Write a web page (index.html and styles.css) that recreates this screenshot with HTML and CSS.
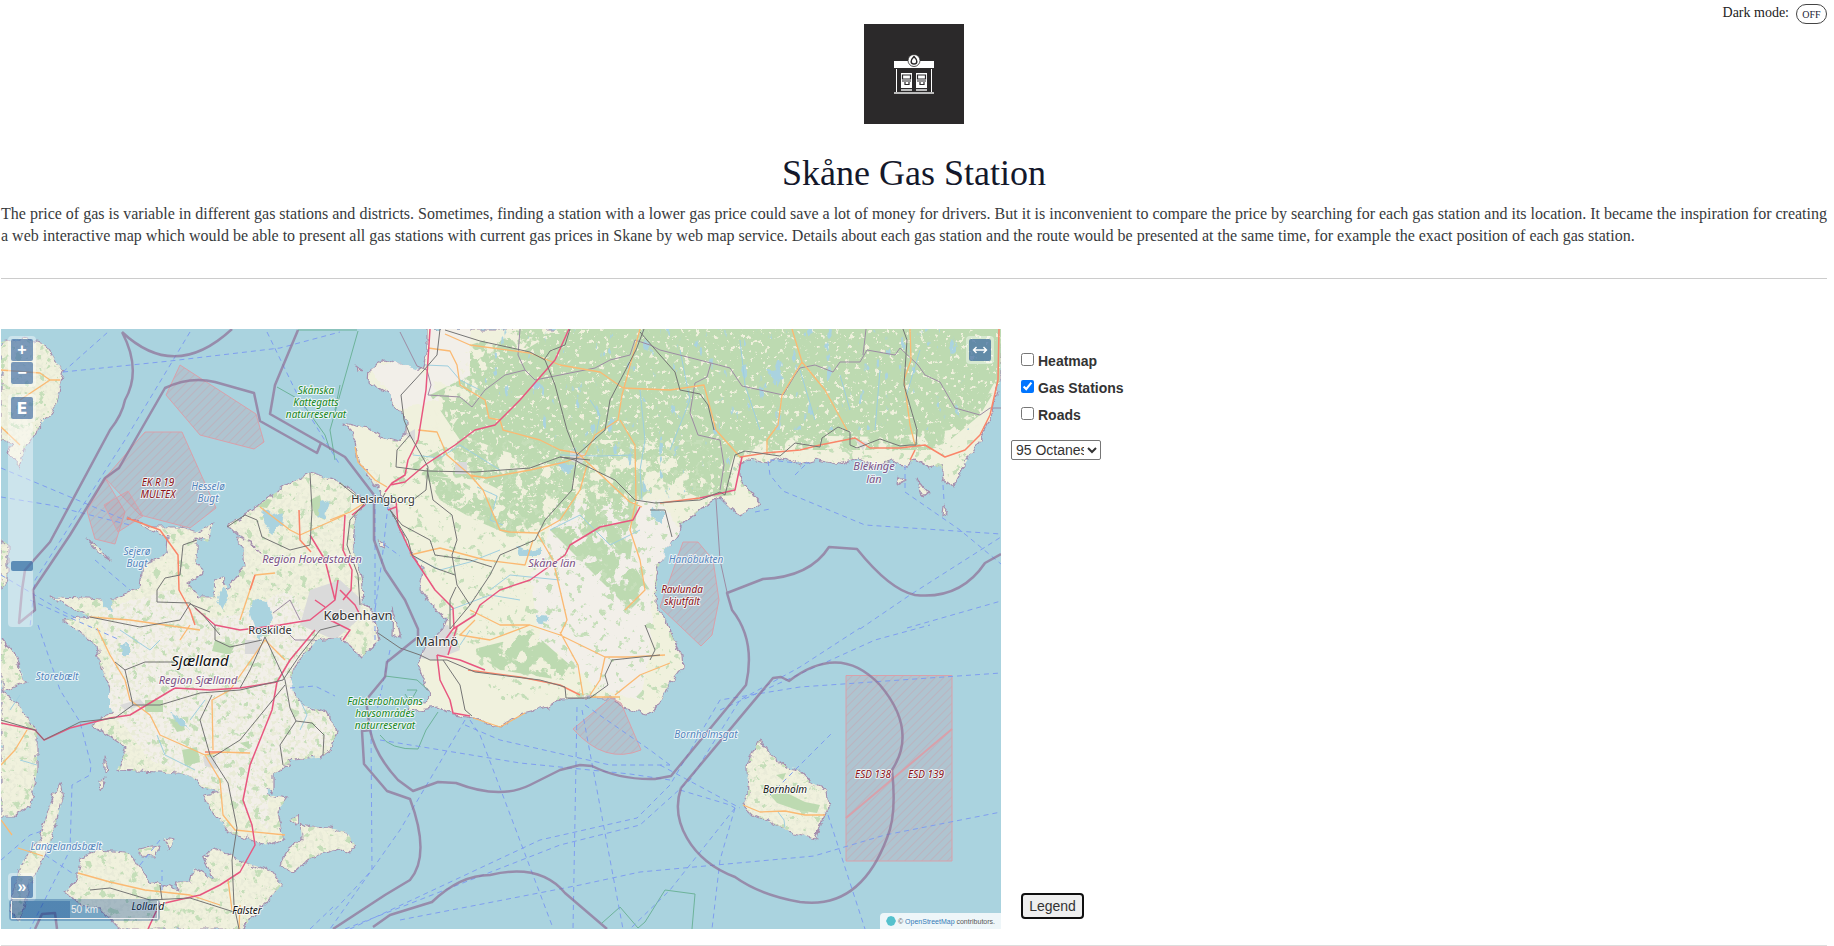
FILE: index.html
```html
<!DOCTYPE html>
<html lang="en">
<head>
<meta charset="utf-8">
<title>Skåne Gas Station</title>
<link rel="stylesheet" href="styles.css">
</head>
<body>
<header class="top">
  <div class="mode"><label for="dark">Dark mode:</label><button id="dark" class="mode-btn" type="button">OFF</button></div>
  <svg class="logo" viewBox="0 0 100 100" role="img" aria-label="Gas station">
    <rect width="100" height="100" fill="#2b292a"/>
    <path fill="#fff" d="M30 37h40v7H30zM32 45h1v23h-1zM67 45h1v23h-1zM37 49h11v15H37zM52 49h11v15H52z"/>
    <path fill="#bbb" d="M30 68h40v2H30zM37 65h11v2H37zM52 65h11v2H52z"/>
    <path fill="none" stroke="#2b292a" stroke-width="1.2" d="M38.500 51h8v4h-8zM53.500 51h8v4h-8zM38 57h9M53 57h9M41 58v2.500h4V58M56 58v2.500h4V58"/>
    <circle cx="50" cy="36.500" r="6" fill="#fff" stroke="#2b292a" stroke-width=".8"/>
    <path fill="none" stroke="#2b292a" stroke-width="1.500" d="M50 32.500c-4 4-3.500 7.500 0 7.500s4-3.500 0-7.500z"/>
  </svg>
  <h1>Skåne Gas Station</h1>
  <p class="intro">The price of gas is variable in different gas stations and districts. Sometimes, finding a station with a lower gas price could save a lot of money for drivers. But it is inconvenient to compare the price by searching for each gas station and its location. It became the inspiration for creating a web interactive map which would be able to present all gas stations with current gas prices in Skane by web map service. Details about each gas station and the route would be presented at the same time, for example the exact position of each gas station.</p>
</header>
<main class="content">
  <div class="map">
    <svg class="tiles" viewBox="1 329 1000 600" preserveAspectRatio="xMidYMid slice">
      <defs>
        <filter id="holes" x="0" y="0" width="1" height="1" color-interpolation-filters="sRGB">
          <feTurbulence type="fractalNoise" baseFrequency=".2" numOctaves="4" seed="8"/>
          <feColorMatrix values="0 0 0 0 0 0 0 0 0 0 0 0 0 0 0 14 0 0 0 -8.900" result="n"/>
          <feComposite in="SourceGraphic" in2="n" operator="in"/>
        </filter>
        <filter id="lakes" x="0" y="0" width="1" height="1" color-interpolation-filters="sRGB">
          <feTurbulence type="fractalNoise" baseFrequency=".12 .05" numOctaves="4" seed="31"/>
          <feColorMatrix values="0 0 0 0 0 0 0 0 0 0 0 0 0 0 0 16 0 0 0 -11" result="n"/>
          <feComposite in="SourceGraphic" in2="n" operator="in"/>
        </filter>
        <filter id="woods" x="0" y="0" width="1" height="1" color-interpolation-filters="sRGB">
          <feTurbulence type="fractalNoise" baseFrequency=".13" numOctaves="4" seed="21"/>
          <feColorMatrix values="0 0 0 0 0 0 0 0 0 0 0 0 0 0 0 14 0 0 0 -8.700" result="n"/>
          <feComposite in="SourceGraphic" in2="n" operator="in"/>
        </filter>
        <filter id="fields" x="0" y="0" width="1" height="1" color-interpolation-filters="sRGB">
          <feTurbulence type="fractalNoise" baseFrequency=".25" numOctaves="3" seed="12"/>
          <feColorMatrix values="0 0 0 0 0 0 0 0 0 0 0 0 0 0 0 8 0 0 0 -4" result="n"/>
          <feComposite in="SourceGraphic" in2="n" operator="in"/>
        </filter>
        <filter id="dense" x="0" y="0" width="1" height="1" color-interpolation-filters="sRGB">
          <feTurbulence type="fractalNoise" baseFrequency=".07" numOctaves="5" seed="4"/>
          <feColorMatrix values="0 0 0 0 0 0 0 0 0 0 0 0 0 0 0 18 0 0 0 -7.600" result="n"/>
          <feComposite in="SourceGraphic" in2="n" operator="in"/>
        </filter>
        <filter id="coast" x="-.05" y="-.05" width="1.100" height="1.100">
          <feTurbulence type="fractalNoise" baseFrequency=".11" numOctaves="3" seed="3"/>
          <feDisplacementMap in="SourceGraphic" scale="8" xChannelSelector="R" yChannelSelector="G"/>
        </filter>
        <pattern id="hatch" width="6" height="6" patternUnits="userSpaceOnUse" patternTransform="rotate(45)">
          <rect width="6" height="6" fill="#c08f9c" fill-opacity=".22"/>
          <path d="M0 0v6" stroke="#d98f98" stroke-opacity=".6"/>
        </pattern>
        <g id="land">
          <path id="sweden" d="M427 329V350L423 367 417 372 402 365 385 359 370 368 369 383 390 395 395 408 407 423V435L395 441 380 437 367 428 345 422 355 442 358 460 373 483 385 497 393 513 402 533 410 553 423 570 420 590 433 607 447 620 443 630 427 645 418 665 425 682 430 695 427 703 407 702 410 712 437 707 453 715 473 718 487 725 502 727 523 713 547 707 560 699 590 698 613 698 623 708 647 714 658 707 667 688 683 668 682 655 670 632 668 623 656 605 657 573 663 553 677 537 680 527 703 507 720 497 730 507 740 515 760 503 740 480 738 465 750 460 767 463 785 458 800 465 817 460 840 465 860 458 875 466 893 461 905 468 915 459 930 469 941 466 943 480 953 487 963 467 980 440 993 413 1000 380 1001 329Z"/>
          <path id="zealand" d="M127 518 150 527 180 527 197 532 213 523 208 542 197 538 197 563 203 573 187 583 200 597 213 597 214 580 222 577 229 590 233 580 245 567 243 548 237 537 250 542 260 552 227 525 253 510 283 487 310 473 340 482 365 502 355 517 353 547 363 583 362 603 372 610 378 642 362 657 350 645 343 637 317 640 293 668 290 688 303 705 327 713 337 732 330 750 320 758 293 760 273 775 273 792 258 784 262 794 287 798 277 812 283 838 267 845 247 838 230 833 213 812 203 795 221 792 203 787 193 778 180 773 117 770 127 748 113 738 92 725 112 712 110 688 100 665 97 645 73 628 62 620 90 617 50 597 87 598 113 600 140 587 143 567 167 553 168 537 150 530Z"/>
          <path id="lolland" d="M78 870 82 857 97 850 127 852 150 882 180 890 176 882 190 882 194 868 214 880 204 856 217 848 233 858 273 872 282 885 260 908 243 929H120L100 908 82 905 65 892 78 880Z"/>
          <path id="funen" d="M290 848 280 865 293 872 310 858 340 848 350 852 355 845 347 832 330 828 310 827 300 822 302 838ZM60 783 50 805 40 838 20 865 10 912 20 922 30 885 47 852 63 798ZM1 693 17 702 37 732 37 772 30 805 13 817 1 817ZM1 638 13 652 26 682 1 692ZM1 342 23 338 43 343 63 370 57 403 37 430 25 447 20 467 7 453 13 443 1 439ZM1 538 8 545 8 580 1 590Z"/>
          <path id="islets" d="M759 740 770 755 787 767 797 768 810 782 827 790 829 808 822 818 816 838 793 833 770 822 753 815 743 805 748 795 747 765ZM87 540 98 547 112 561 98 552ZM379 539 386 542 385 550 378 547ZM104 756 108 770 104 773ZM99 782 105 780 100 790ZM138 850 158 846 156 856 142 855ZM164 838 174 840 169 850ZM393 607 400 638 392 635ZM898 475 905 480 896 485ZM918 480 928 492 922 496ZM943 505 948 513 942 516ZM355 366 362 371 356 370ZM290 820 298 815 296 824Z"/>
        </g>
        <clipPath id="inland"><use href="#sweden"/><use href="#zealand"/><use href="#lolland"/><use href="#funen"/><use href="#islets"/></clipPath>
        <clipPath id="swe"><use href="#sweden"/></clipPath>
      </defs>
      <rect x="1" y="329" width="1000" height="600" fill="#aad3df"/>
      <g filter="url(#coast)">
        <use href="#land" fill="#f0f1dd" stroke="#a58fae" stroke-width="1.200"/>
        <path fill="#f2efe9" d="M110 650 100 610 170 590 205 620 250 610 285 590 320 630 290 670 295 700 330 720 330 745 265 770 270 830 220 790 150 760 110 710ZM370 368 395 362 430 375 440 400 400 410ZM560 500 660 500 680 530 655 570 650 650 640 700 600 690 540 640 530 580ZM430 329H470V390L430 380Z"/>
      </g>
      <g clip-path="url(#swe)">
        <path fill="#bddab1" filter="url(#dense)" d="M430 395 470 375 470 345 520 329H1001V380L980 415 950 440 930 450H745L735 495 700 498 660 480 620 520 570 545 560 520 480 480 420 475 410 465 460 440Z"/>
        <path fill="#bddab1" d="M500 365 560 329H1001V370L985 400 950 430 890 437 770 435 735 452 722 490 690 470 680 440 650 440 600 440 570 470 500 450 450 430 470 400Z"/>
        <path fill="#bddab1" filter="url(#dense)" d="M425 475 460 480 490 500 530 475 570 470 575 500 540 530 510 535 475 520 440 500ZM550 530 580 510 640 490 630 560 650 590 630 610 580 560Z"/>
        <path fill="#eff0dc" filter="url(#holes)" d="M480 329H1001V465H740V500L620 510 560 540 430 500 400 460Z"/>
        <path fill="#aad3df" filter="url(#lakes)" d="M480 329H980V430H740V470L640 510 480 380Z"/>
        <path fill="#c5deb9" filter="url(#woods)" d="M390 440H710V700H500L390 560ZM740 440H990V500H740Z"/>
        <path fill="#bddab1" filter="url(#dense)" d="M470 650 510 640 530 630 570 665 560 680 500 670Z"/>
      </g>
      <g clip-path="url(#inland)">
        <path fill="#e9ebd8" filter="url(#fields)" d="M1 329H70V470H1ZM1 470H380V929H1ZM740 735H835V845H740Z"/>
        <path fill="#c5deb9" filter="url(#woods)" d="M1 329H70V470H1ZM1 470H380V929H1ZM740 735H835V845H740Z"/>
        <path fill="#bddab1" d="M145 700h18v12h-18zM182 750l15-3 3 15-15 4zM770 795l15-3 20 10 15 3-3 8-20-3-20-7zM776 775l10-2-3 7zM254 495l18 5-5 8-14-2zM170 720l12-2 3 12-8 2zM240 743l9-2v8zM215 640l20 5-5 10-18-4zM310 500l10-5 5 25-10-5z"/>
        <path fill="#dadada" d="M310 590 340 580 362 600 358 620 335 640 300 625ZM245 640h15v14h-15zM203 757h12l2 12-12-3zM423 630l25-5 12 25-25 10-16-2zM365 495l15-2 20 18-5 5zM405 435l10-6v12zM455 462h12v12h-12zM570 450l15 4-3 10-12-3zM855 440l12 2-4 8zM120 705l20-6 5 6-20 5z"/>
      </g>
      <path filter="url(#coast)" fill="#aad3df" d="M263 507 272 515 284 512 282 525 272 533 264 520ZM320 503 330 500 325 520 317 517ZM253 600 268 602 273 618 260 640 250 612ZM100 595 113 601 111 611 103 605ZM120 645 129 644 129 656 122 656ZM225 585 228 598 223 612 217 597ZM768 371 778 368 784 378 775 385ZM515 545 525 550 540 548 540 556 520 556ZM559 461 572 465 570 475 560 470ZM536 615 548 617 544 624 538 622ZM650 508 663 510 663 525 655 520ZM170 712 183 720 190 730 177 724Z"/>
      <g class="stream">
        <path d="M425 365 448 366 460 380 480 390M413 455 440 458 460 445 500 470M477 487 497 496 490 520 503 525M590 400 600 415 595 440M560 455 600 456 633 455M640 390 645 440 640 470 642 500M550 530 580 515 610 545 640 530M410 555 440 570 470 562 500 550M490 590 510 575 560 580M450 610 490 595 520 600M740 340 745 385 760 430M800 370 815 420M840 375 850 410M880 370 875 430M920 350 905 400M680 350 690 400 670 450M460 645 470 630M120 630 150 650 160 640M157 735 165 755 195 770M205 700 190 720M778 812 784 820 785 828M300 700 307 715 300 730M10 710 20 695M20 760 37 765"/>
      </g>
      <g class="border">
        <path d="M427 370 431 385 428 395 460 397 472 407 485 390 505 375 525 370 535 380 560 375 595 368 610 360 630 355 635 340 650 345 660 350 711 363 730 368 742 386 783 395 795 375 800 368 815 365 833 372 840 362 860 362 867 350 895 355 900 348 918 365 925 375 940 382 955 408 980 415 990 408H1001M520 329 518 355 525 370M711 363 707 377 695 383 690 413 698 435 720 440 724 465 720 490M400 332 417 366 427 370M866 329 863 355M716 500 720 560 727 592M273 613 290 600 300 620M280 625 295 640 315 640"/>
      </g>
      <g class="zone">
        <path d="M180 365 166 395 200 435 254 449 264 442 256 414ZM145 432H182L216 508 190 528 140 515 105 478Z"/>
        <path d="M105 478 87 511 95 539 115 544 125 512Z"/>
        <path d="M104 505 128 491 143 516 118 532Z"/>
        <path d="M683 542H698L713 560 719 600 712 635 701 646 660 607ZM573 729 611 698 621 703 641 750 Q605 765 573 729ZM846 675.500H952V861H846Z"/>
        <path class="zone-line" d="M846 818 952 729"/>
      </g>
      <g class="reserve">
        <path d="M277 387 300 400 325 435 330 450M358 331 330 430 335 460M340 385 335 410M298 330H357M385 676 417 680 428 690M380 735Q390 750 418 749L426 730 438 712M407 690H417L410 702 405 694M602 923 620 907 638 928 645 922 665 890 695 894 692 929"/>
      </g>
      <g class="ferry">
        <path d="M63 372 108 332M63 372 170 361 280 348 340 332M190 332 125 440 35 580 30 627M267 332 300 400 340 465M1 468 125 520M1 497 50 505 130 525M1 575 60 610 80 620M30 600 120 640M95 560 130 590M38 625 60 690 80 722 91 765 90 775 72 785 70 850 30 929M45 855 75 875M290 688 315 686 335 696M375 500V640M388 505 382 560 375 610M385 545 400 556M390 650 375 720M371 730 372 870 330 915M465 720 400 830 330 929M470 720 480 735 553 928M380 740 520 763 630 774 670 780M465 725 500 740 610 765 670 765M577 707 573 929M582 710 623 929M585 705 650 750 670 765M350 929 540 840 637 818 670 785 720 700 800 687 1001 673M345 929 560 845 640 825 690 780 740 700 800 667 860 628M720 710 875 640 930 625M660 765 740 808M680 790 730 805 735 808M735 808 670 890 630 929M735 808 720 860 712 929M770 795 833 732M828 815 865 929M400 920 580 885 640 872 814 856 885 835 1001 812M768 461 770 475 783 491 865 525 1001 534M810 463 796 463 770 460M795 475 805 465M905 465V492L960 530 1001 564M860 629 910 595 1001 537M907 628 1001 601M943 485 944 500M755 512 770 509M1 860 30 835 45 830M140 865 160 840M162 890V870M310 929 335 905"/>
      </g>
      <g class="orange">
        <path d="M1 370 40 373 50 380 60 380M50 380 20 400M1 427 20 445M355 447 358 462 375 480 387 487M428 348 450 351 457 365 460 385 485 400 489 418 500 420 503 430 540 440 560 450 578 453 585 460 630 502 642 507M418 430 437 432 447 455 470 475 486 478 530 470 565 462 585 455 595 435 618 420 622 395 640 329M445 334 470 345 530 353 560 365 600 372 623 388 670 390 704 385 716 430 740 457M620 420 635 445 636 500 630 530 640 560 645 590 625 610M470 475 483 490 500 530 510 532 537 533 560 520 580 490 587 465M537 533 553 560 560 590 567 620 560 635 530 625 490 640 460 635 475 620M410 555 440 548 485 560 525 565 533 540M792 329 802 362 825 390 847 430M802 362 782 395 778 425 767 440V455M910 329 911 360 904 380 910 425 915 445M560 632 578 665 583 695M560 635 605 657 630 657 665 655M605 657 600 680 590 695M615 695 640 675 670 663M470 610 500 625 530 625M330 520 350 512 363 504M90 617 130 620 200 630M180 640 190 625M97 628 110 655 125 680 130 700 150 715 160 735 205 755 220 752 250 753M205 755 220 780 223 815 235 830 285 835M213 750 212 700 230 690 265 640 285 660M260 507 290 530 300 535 345 515M240 620 255 575 275 573M78 873 110 882 145 890 190 895 220 905M228 880 232 910M240 905 239 929M1 765 15 750 27 730M18 848 43 856M743 805 760 812 785 811 805 815 825 815M473 718 500 727 525 713M590 697 620 697M1 820 12 835"/>
      </g>
      <g class="red">
        <path d="M740 457 765 453 800 450 820 445 855 438 870 448 900 448 925 445 945 457 965 450 980 435 990 415 998 380 999 329M127 518 160 530 178 555 179 590 190 610 195 625M299 510 300 540 311 552M205 752 222 752M468 670 520 677 560 685 580 695M660 503 700 498M910 460 915 450M250 590 255 575"/>
      </g>
      <g class="pink">
        <path d="M430 329 426 390 418 440 408 460 405 475 392 483 385 492M569 329 555 360 520 400 495 425 475 430 455 445 425 465 405 482 390 485M396 500 398 525 412 555 435 590 453 608 454 629M396 507 388 510M640 507 633 520 600 527 570 545 565 555 530 580 500 590 480 605 475 615 453 629 445 640M700 498 735 490 742 457M437 655 440 680 450 700 453 713 470 716M437 655 460 660 485 670M457 627 448 655M1 723 35 730 44 740 70 728 110 718 130 715 155 700 175 688 210 690 240 688 277 682 290 660 315 630M277 682 272 710 260 740 250 765 243 800 252 825 255 845 240 872 220 885 200 895 165 903M160 903 148 929M195 608 215 625 240 630 280 625 310 620 335 600 338 580M335 600 325 560 310 535M345 515 343 550 352 570 351 590 343 600M340 590 355 605 360 615M330 620 350 630 343 640M365 505 352 515M315 600 325 607"/>
      </g>
      <g class="rail">
        <path d="M440 329 437 355 424 370 401 395 404 420 410 435 428 467 426 490 413 500M410 435 397 450 396 467 427 471 475 472 530 468 560 457 590 460M427 468 433 500 452 515 457 540 452 555 457 585 470 605M560 457 575 460 580 463 615 480 635 500 655 503 700 500 720 492 725 495 735 455 745 451 780 456 795 443 820 447 822 438 838 427 850 432 850 445 857 448 880 439 900 446 910 445 916 445 917 430 904 385 907 340 903 329M445 330 480 341 530 352 545 360 555 385 567 430 577 455 572 490 545 520 535 540 500 555 490 575 470 605 450 629M544 360 550 351 565 345 570 329M644 329 636 350 610 400 605 430 577 455M640 332 660 355 675 372 680 390 700 394 708 405 714 430M385 493 380 503M390 510 402 525 430 540 435 555 470 560 492 567M390 510 408 540 412 555 435 568 455 575M450 629V600L456 587M340 483 365 503 350 520 347 545 358 575 360 605M378 633 400 648 420 655 430 660 447 660 475 672 540 680 565 687 566 698 590 698 608 685 605 675 612 660 660 655M443 660 460 685 465 710 472 716M645 625 655 650 650 660M650 510 665 510 672 537M227 527 245 515 257 520 262 537 290 550 310 545 312 510 310 473M197 540 183 545 180 575 165 578 157 590V602L190 603 203 615 220 635M90 617 140 627 180 620 190 604 210 612M1 720 35 730 44 740 80 722 115 718 133 705 160 705 200 693 240 690 283 680 300 655 320 630 340 625M133 705 125 670 115 662M125 670 145 662 175 662M212 695 200 720 210 755 228 783 237 828 232 860 234 905 239 929M213 757 240 740 285 685M265 637 285 680 290 708 296 721 280 745 283 765M296 721 312 723 324 735 323 755M265 637 250 670 240 688M215 625 215 640 230 647 262 640M90 890 110 888 150 900 190 898 234 912M160 885 162 900"/>
      </g>
      <g class="sea-border">
        <path d="M122 332Q175 382 232 329M122 332Q142 370 125 400Q122 415 110 430L50 542 25 570 22 590 19 623 35 610 33 590 70 535 105 478 119 468 165 388Q190 376 215 382L254 393 260 421 317 453 321 443 270 414 275 385 298 330M321 443 345 457 374 495 374 540 385 570 405 600 418 629 418 637 387 662 385 677 366 700 370 730Q375 755 398 780L413 791 438 782 456 783Q500 800 530 785L560 770 580 765 592 766Q620 780 655 779L671 776 746 685Q756 640 732 610L727 593 763 579Q810 577 829 547L857 549Q890 590 915 595Q960 600 985 563L1001 554M371 730 362 731 364 764 387 791 410 799Q431 855 410 880L385 895 333 929M373 927 390 915 432 902Q460 875 490 875Q540 863 565 893L607 929M681 788 773 678 781 677 789 681Q840 642 880 685Q918 730 892 770Q897 815 887 838Q860 910 800 902Q760 895 735 877C690 860 670 820 681 788M35 929 42 914 55 913 57 929"/>
      </g>
      <g class="label">
        <g class="place">
          <text x="383" y="503">Helsingborg</text><text x="270" y="634">Roskilde</text>
          <text class="city" x="358" y="620">København</text><text class="city" x="437" y="646">Malmö</text>
        </g>
        <g class="isle"><text class="big" x="200" y="666">Sjælland</text><text x="785" y="793">Bornholm</text><text x="148" y="910">Lolland</text><text x="247" y="914">Falster</text></g>
        <g class="region"><text x="312" y="563">Region Hovedstaden</text><text x="198" y="684">Region Sjælland</text><text x="552" y="567">Skåne län</text><text x="874" y="470">Blekinge<tspan x="874" dy="13">län</tspan></text></g>
        <g class="water"><text x="208" y="490">Hesselø<tspan x="208" dy="12">Bugt</tspan></text><text x="137" y="555">Sejerø<tspan x="137" dy="12">Bugt</tspan></text><text x="57" y="680">Storebælt</text><text x="66" y="850">Langelandsbælt</text><text x="696" y="563">Hanöbukten</text><text x="706" y="738">Bornholmsgat</text></g>
        <g class="nature"><text x="316" y="394">Skånska<tspan x="316" dy="12">Kattegatts</tspan><tspan x="316" dy="12">naturreservat</tspan></text><text x="385" y="705">Falsterbohalvöns<tspan x="385" dy="12">havsområdes</tspan><tspan x="385" dy="12">naturreservat</tspan></text></g>
        <g class="danger"><text x="158" y="486">EK R 19<tspan x="158" dy="12">MULTEX</tspan></text><text x="682" y="593">Ravlunda<tspan x="682" dy="12">skjutfält</tspan></text><text x="873" y="778">ESD 138</text><text x="926" y="778">ESD 139</text></g>
      </g>
    </svg>
    <div class="ctl zoom-ctl"><button type="button" aria-label="Zoom in">+</button><button type="button" aria-label="Zoom out">−</button></div>
    <div class="ctl extent-ctl"><button type="button" aria-label="Fit to extent">E</button></div>
    <div class="slider"><button type="button" aria-label="Zoom level"></button></div>
    <div class="ctl full-ctl"><button type="button" aria-label="Full screen"><svg viewBox="0 0 16 10"><path d="M1.500 5h13M4.500 2l-3 3 3 3M11.500 2l3 3-3 3" fill="none" stroke="#fff" stroke-width="1.400"/></svg></button></div>
    <div class="ctl over-ctl"><button type="button" aria-label="Overview map">»</button></div>
    <div class="scale"><div>50 km</div></div>
    <div class="credit"><svg viewBox="0 0 10 10"><path fill="#55c1cd" d="M5 0l3 1 2 4-2 4-3 1-3-1-2-4 2-4z"/></svg><span>© <a href="#">OpenStreetMap</a> contributors.</span></div>
  </div>
  <aside class="side">
    <div class="layers">
      <label><input type="checkbox">Heatmap</label>
      <label><input type="checkbox" checked>Gas Stations</label>
      <label><input type="checkbox">Roads</label>
    </div>
    <select class="fuel" aria-label="Fuel type"><option>95 Octanes</option></select>
    <button class="legend" type="button">Legend</button>
  </aside>
</main>
</body>
</html>
```
FILE: styles.css
```css
* { box-sizing: border-box; }
body { margin: 0; padding: 0 7px 0 1px; font-family: "Liberation Serif", serif; color: #333; background: #fff; }
.top { display: flex; flex-direction: column; align-items: center; border-bottom: 1px solid #ccc; padding-bottom: 31px; }
.mode { align-self: flex-end; display: flex; align-items: center; gap: 7px; height: 24px; padding-top: 2px; font-size: 14px; color: #222; }
.mode-btn { margin-top: 2px; width: 31px; height: 20px; padding: 0; border: 1px solid #444; border-radius: 10px; background: #fff; color: #223; font: 10px "Liberation Serif", serif; }
.logo { width: 100px; height: 100px; display: block; }
h1 { margin: 28px 0 9px; font-size: 36px; line-height: 42px; font-weight: 400; color: #14182b; }
.intro { margin: 0; font-size: 16px; line-height: 22px; text-align: justify; color: #373a3c; }
.content { display: flex; align-items: stretch; margin-top: 50px; padding-bottom: 16px; border-bottom: 1px solid #ddd; }
.map { position: relative; flex: 0 0 auto; width: 55%; min-width: 1000px; aspect-ratio: 5 / 3; max-width: 1000px; overflow: hidden; font-family: "Liberation Sans", sans-serif; }
.tiles { display: block; width: 100%; height: 100%; }
.tiles path { stroke-linejoin: round; }
.stream, .border, .reserve, .ferry, .orange, .red, .pink, .rail, .sea-border { fill: none; }
.stream { stroke: #9fcfdf; }
.border { stroke: #9d8ba3; }
.reserve { stroke: #6db39a; }
.ferry { stroke: #7f9ef0; stroke-dasharray: 5 4; }
.orange { stroke: #fbb972; stroke-width: 1.3; }
.red { stroke: #fa8569; stroke-width: 1.5; }
.pink { stroke: #e8567f; stroke-width: 1.5; }
.rail { stroke: #757575; stroke-width: 1; }
.sea-border { stroke: #8f6d94; stroke-opacity: .7; stroke-width: 2.5; }
.zone { fill: url(#hatch); stroke: #d9a0aa; }
.zone-line { stroke-width: 2; }
.label { font-family: "Noto Sans", sans-serif; font-size: 10px; text-anchor: middle; paint-order: stroke; stroke: #fff; stroke-opacity: .75; stroke-width: 2px; stroke-linejoin: round; }
.label .place { fill: #333; font-size: 11px; }
.label .city { font-size: 13px; }
.label .isle { fill: #111; font-style: italic; }
.label .big { font-size: 15px; }
.label .region { fill: #7b5285; font-style: italic; font-size: 11px; }
.label .water { fill: #5586bd; font-style: italic; }
.label .nature { fill: #16861b; font-style: italic; }
.label .danger { fill: #8b1016; font-style: italic; }
.ctl { position: absolute; padding: 3px; border-radius: 4px; background: rgba(255,255,255,.4); }
.ctl button { display: flex; align-items: center; justify-content: center; width: 22px; height: 22px; padding: 0; border: 0; border-radius: 2px; background: rgba(0,60,136,.5); color: #fff; font: bold 16px "Liberation Sans", sans-serif; }
.zoom-ctl { left: 7px; top: 7px; }
.zoom-ctl button + button { margin-top: 1px; }
.extent-ctl { left: 7px; top: 65px; }
.extent-ctl button { font-family: "DejaVu Sans", sans-serif; }
.full-ctl { right: 7px; top: 7px; }
.full-ctl button { background: rgba(20,75,140,.6); }
.full-ctl svg { width: 16px; height: 10px; }
.over-ctl { left: 7px; bottom: 28px; }
.slider { position: absolute; left: 7px; top: 93px; width: 25px; height: 205px; border-radius: 4px; background: rgba(255,255,255,.4); }
.slider button { position: absolute; left: 3px; top: 139px; width: 22px; height: 10px; padding: 0; border: 0; border-radius: 2px; background: rgba(0,70,140,.55); }
.scale { position: absolute; left: 8px; bottom: 8px; width: 151px; padding: 2px; border-radius: 4px; background: rgba(0,60,136,.3); }
.scale div { height: 18px; border: 1px solid #eee; border-top: 0; color: #eee; font-size: 10px; line-height: 18px; text-align: center; background: linear-gradient(90deg, rgba(0,60,136,.3) 40%, transparent 40%); }
.credit { position: absolute; right: 0; bottom: 0; display: flex; align-items: center; gap: 2px; height: 16px; padding: 0 6px; border-radius: 4px 0 0; background: rgba(255,255,255,.8); font-size: 7px; color: #555; white-space: nowrap; }
.credit svg { width: 10px; height: 10px; }
.credit a { color: #337ab7; text-decoration: none; }
.side { display: flex; flex-direction: column; align-items: flex-start; padding: 18px 0 10px 10px; font-family: "Liberation Sans", sans-serif; }
.layers { padding-left: 10px; }
.layers label { display: flex; align-items: center; gap: 4px; height: 27px; font-size: 14px; font-weight: bold; }
.layers input { margin: 0 0 3px; width: 13px; height: 13px; }
.fuel { margin-top: 12px; width: 90px; height: 20px; padding: 0; border: 1px solid #767676; border-radius: 2px; background-color: #fff; color: #333; font: 14px "Liberation Sans", sans-serif; }
.legend { margin: auto 0 0 10px; width: 63px; height: 26px; padding: 0; border: 2px solid #101010; border-radius: 4px; background: #efefef; color: #333; font: 14px "Liberation Sans", sans-serif; }
```
